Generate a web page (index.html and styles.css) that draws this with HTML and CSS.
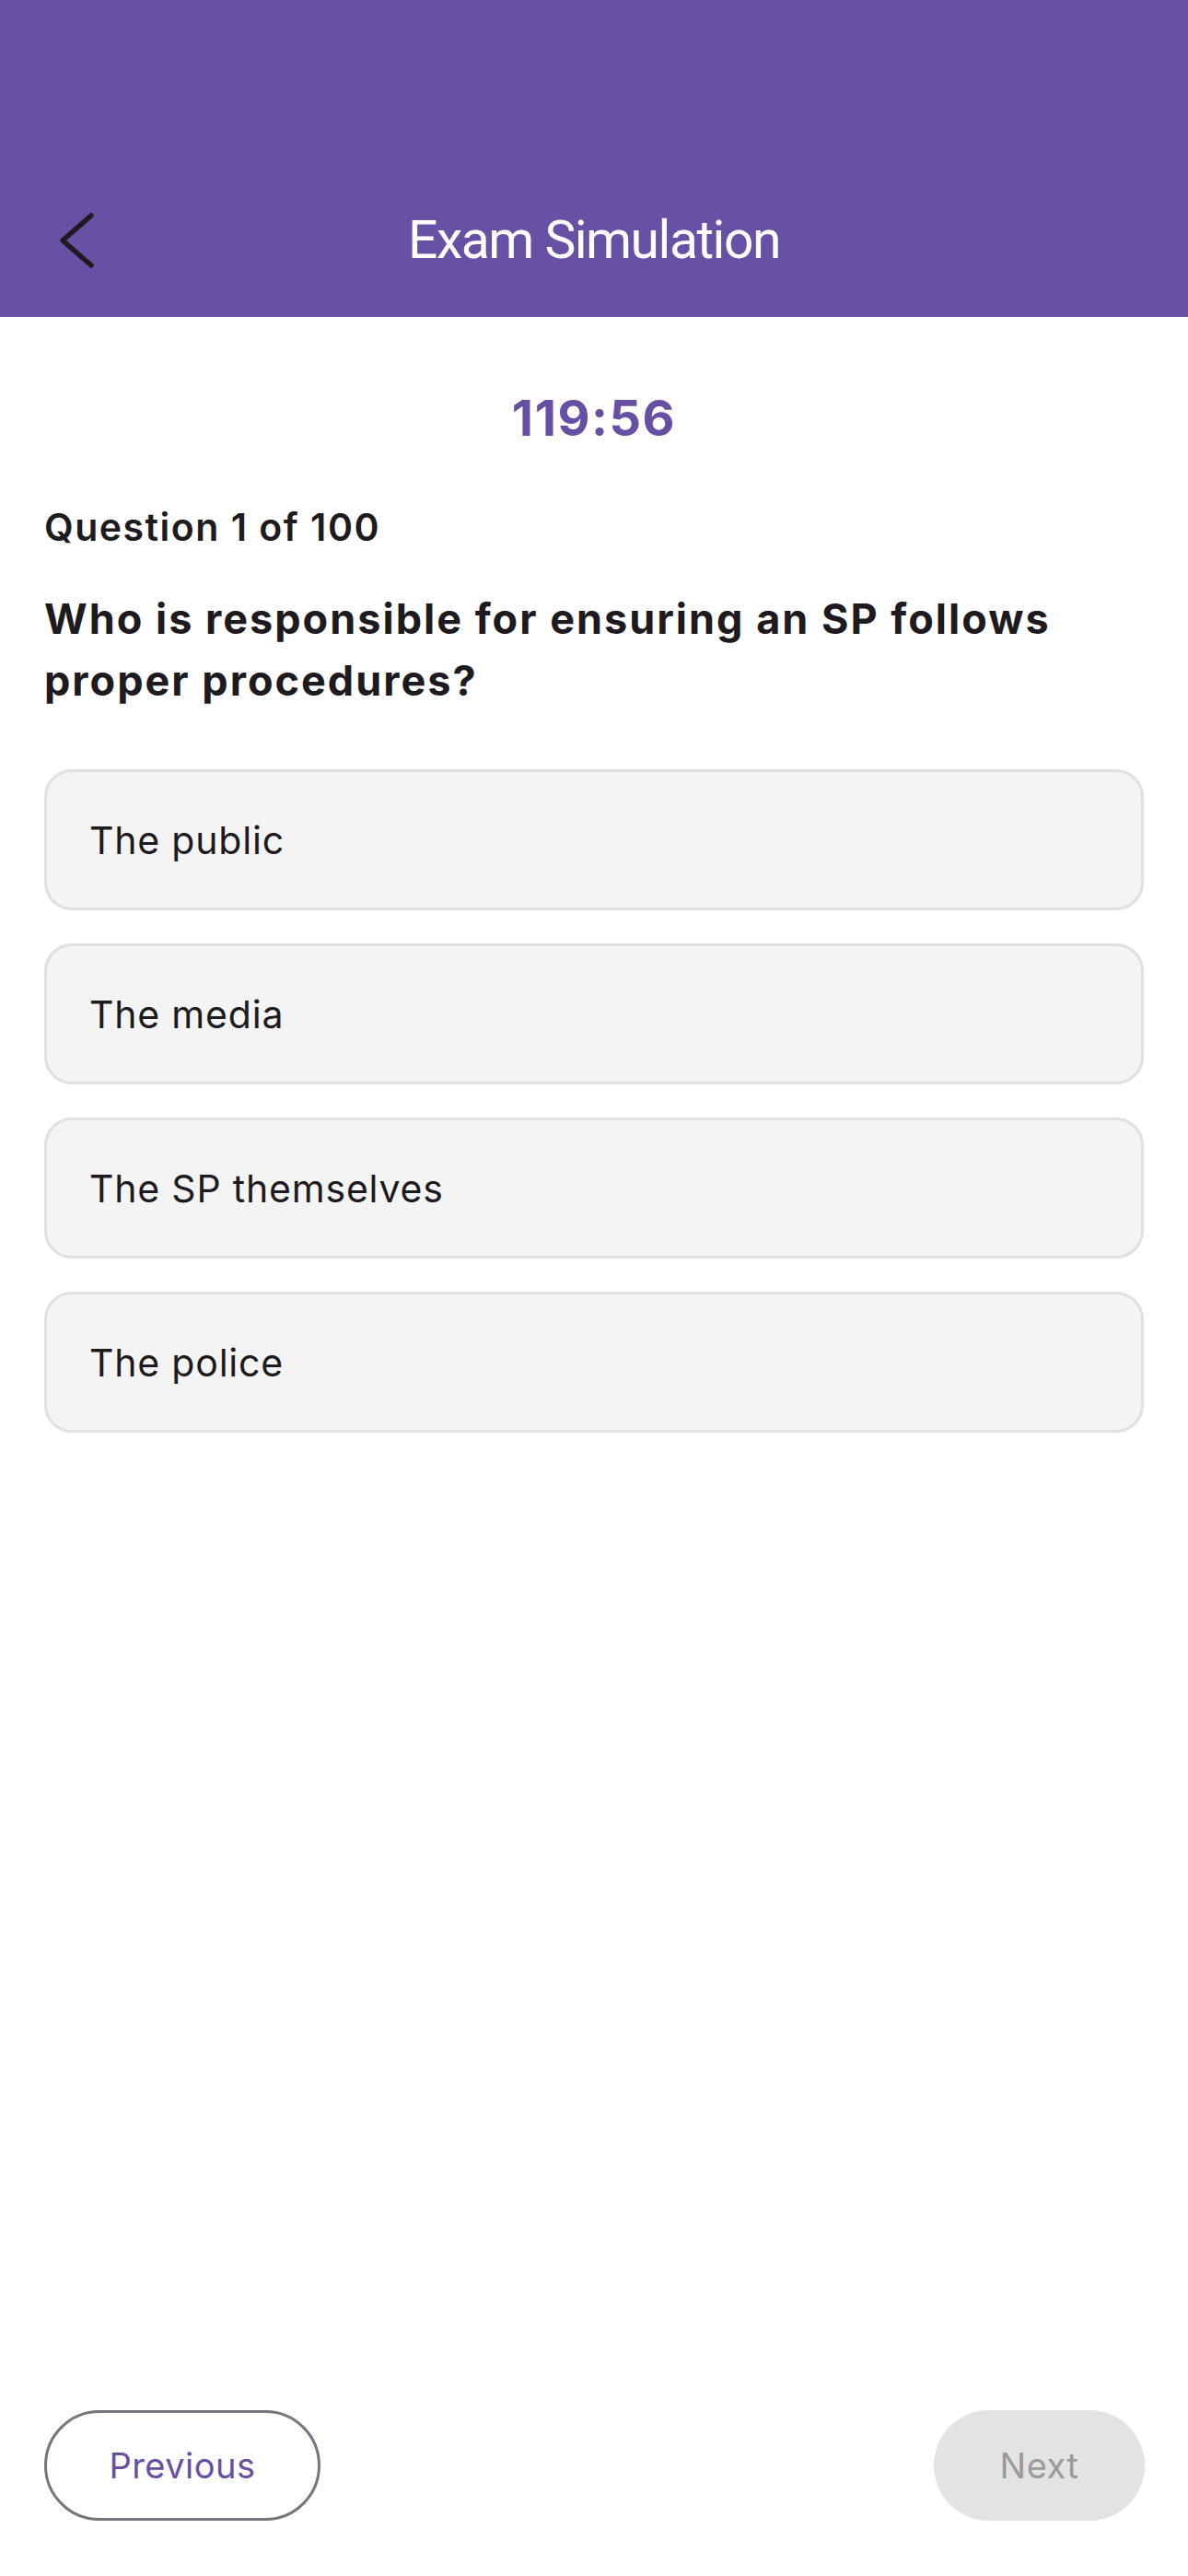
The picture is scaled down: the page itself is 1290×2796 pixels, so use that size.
FILE: index.html
```html
<!DOCTYPE html>
<html>

<head>
  <meta charset="utf-8">
  <meta name="viewport" content="width=device-width">
  <title>Exam Simulation</title>
  <link rel="stylesheet" href="styles.css">
</head>

<body>
  <div class="page">
    <div class="appBar">
      <div class="toolbar">
        <a class="backBtn" href="#">
          <svg width="40" height="64" viewBox="0 0 40 64">
            <polyline points="35,5 4,32 35,59" fill="none" stroke="#1d1b20" stroke-width="5.5" stroke-linecap="round" stroke-linejoin="round"/>
          </svg>
        </a>
        <div class="title">Exam Simulation</div>
      </div>
    </div>

    <div class="content">
      <div class="timer">119:56</div>
      <div class="counter">Question 1 of 100</div>
      <div class="question">Who is responsible for ensuring an SP follows proper procedures?</div>

      <div class="options">
        <div class="option">The public</div>
        <div class="option">The media</div>
        <div class="option">The SP themselves</div>
        <div class="option">The police</div>
      </div>
    </div>

    <div class="footer">
      <button class="btn btnOutline">Previous</button>
      <button class="btn btnDisabled">Next</button>
    </div>
  </div>
</body>
</html>
```

FILE: styles.css
```css
html {
  background-color: #ffffff;
}

body {
  font-family: Inter, "Noto Sans", sans-serif;
  margin: 0;
  padding: 0;
  color: #1d1b20;
}

.page {
  display: flex;
  flex-direction: column;
  height: 100vh;
}

.appBar {
  background-color: #6851a5;
  padding-top: 176px;
}

.toolbar {
  height: 168px;
  display: flex;
  align-items: center;
  justify-content: center;
  position: relative;
}

.backBtn {
  position: absolute;
  left: 64px;
  top: 53px;
  display: flex;
}

.title {
  color: #ffffff;
  font-family: Roboto, "Noto Sans", sans-serif;
  font-size: 57px;
  font-weight: 400;
  letter-spacing: -1.5px;
}

.content {
  flex: 1;
  padding: 0 48px;
}

.timer {
  text-align: center;
  color: #6750a4;
  font-size: 54px;
  font-weight: 700;
  letter-spacing: 1.5px;
  margin-top: 78px;
  line-height: 64px;
}

.counter {
  font-size: 41px;
  font-weight: 600;
  margin-top: 58px;
  line-height: 56px;
  letter-spacing: 1.5px;
}

.question {
  font-size: 45px;
  font-weight: 700;
  line-height: 67px;
  margin-top: 38px;
  letter-spacing: 2px;
}

.options {
  display: flex;
  flex-direction: column;
  gap: 36px;
  margin-top: 63px;
}

.option {
  background-color: #f4f4f4;
  border: 3px solid #e0e0e0;
  border-radius: 30px;
  box-sizing: border-box;
  height: 153px;
  display: flex;
  align-items: center;
  padding: 0 46px;
  font-size: 41px;
  letter-spacing: 0.8px;
}

.footer {
  display: flex;
  justify-content: space-between;
  padding: 0 47px 60px 48px;
}

.btn {
  height: 120px;
  border-radius: 60px;
  font-family: Inter, "Noto Sans", sans-serif;
  font-size: 38px;
  letter-spacing: 0.5px;
  box-sizing: border-box;
}

.btnOutline {
  width: 300px;
  background-color: #ffffff;
  border: 3px solid #79747e;
  color: #6750a4;
}

.btnDisabled {
  width: 229px;
  background-color: #e3e3e3;
  border: none;
  color: #9a9a9a;
}
```
